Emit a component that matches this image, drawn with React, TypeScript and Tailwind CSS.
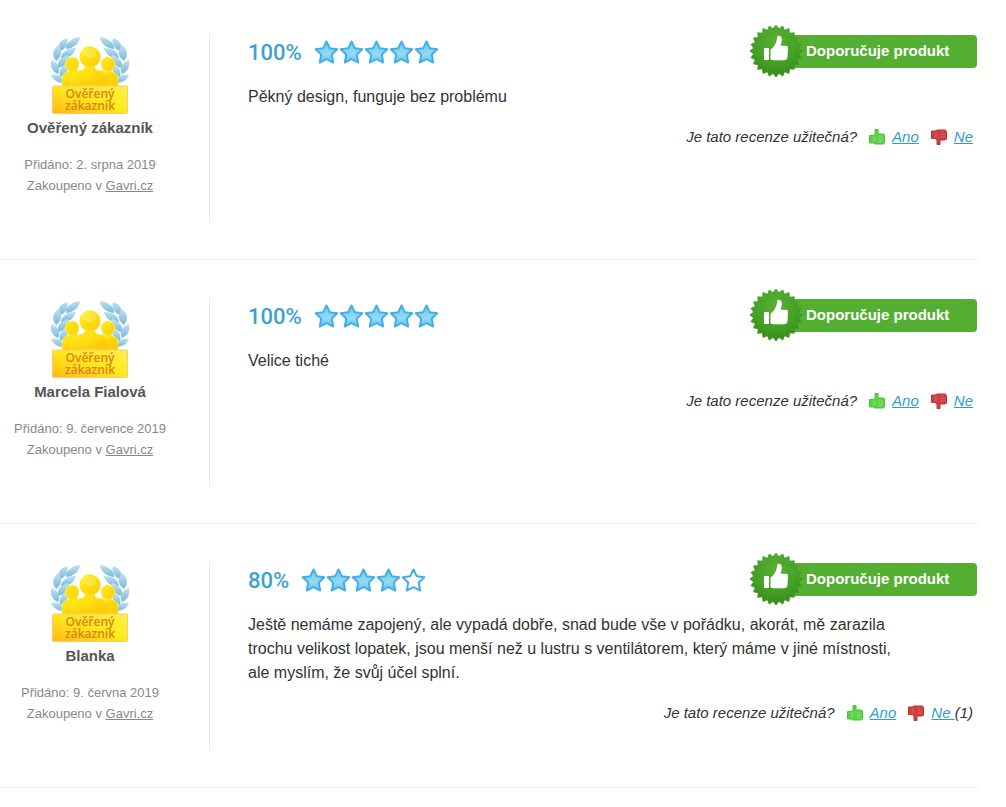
type Review = {
  name: string;
  date: string;
  percent: number;
  stars: number;
  text: string;
  noVotes?: number;
};

const reviews: Review[] = [
  {
    name: 'Ověřený zákazník',
    date: '2. srpna 2019',
    percent: 100,
    stars: 5,
    text: 'Pěkný design, funguje bez problému',
  },
  {
    name: 'Marcela Fialová',
    date: '9. července 2019',
    percent: 100,
    stars: 5,
    text: 'Velice tiché',
  },
  {
    name: 'Blanka',
    date: '9. června 2019',
    percent: 80,
    stars: 4,
    text: 'Ještě nemáme zapojený, ale vypadá dobře, snad bude vše v pořádku, akorát, mě zarazila trochu velikost lopatek, jsou menší než u lustru s ventilátorem, který máme v jiné místnosti, ale myslím, že svůj účel splní.',
    noVotes: 1,
  },
];

const SEAL_TEETH = 24;
const sealPoints = Array.from({ length: SEAL_TEETH * 2 }, (_, i) => {
  const angle = (i * Math.PI) / SEAL_TEETH - Math.PI / 2;
  const r = i % 2 === 0 ? 26.5 : 23;
  return `${(26 + r * Math.cos(angle)).toFixed(2)},${(26 + r * Math.sin(angle)).toFixed(2)}`;
}).join(' ');

function Laurel() {
  return (
    <g fill="url(#leaf)">
      <path d="M16 14C16 7 22 3 30 2C29 9 24 13 16 14Z" />
      <path d="M10 16C7 10 10 5 17 3C19 9 16 14 10 16Z" />
      <path d="M11 23C12 16 18 13 26 13C24 20 18 24 11 23Z" />
      <path d="M6 26C1 20 3 14 8 10C13 16 12 22 6 26Z" />
      <path d="M8 33C7 26 11 22 18 20C19 27 15 32 8 33Z" />
      <path d="M8 39C1 36 0 30 1 25C8 27 11 33 8 39Z" />
      <path d="M14 48C8 48 3 45 1 40C8 38 13 42 14 48Z" />
      <path d="M10 42C8 35 12 31 17 30C19 36 16 40 10 42Z" />
    </g>
  );
}

function CustomerBadge() {
  return (
    <svg className="h-20 w-20" viewBox="0 0 80 80" role="img" aria-label="Ověřený zákazník">
      <defs>
        <linearGradient id="leaf" x1="0" y1="0" x2="0" y2="1">
          <stop offset="0" stopColor="#bfe2f4" />
          <stop offset="1" stopColor="#7ab9da" />
        </linearGradient>
        <linearGradient id="gold" x1="0" y1="0" x2="1" y2="1">
          <stop offset="0" stopColor="#ffef1a" />
          <stop offset="1" stopColor="#fdcb05" />
        </linearGradient>
        <linearGradient id="plate" x1="0" y1="1" x2="1" y2="0">
          <stop offset="0" stopColor="#fdb813" />
          <stop offset="0.5" stopColor="#ffe81a" />
          <stop offset="1" stopColor="#fff04a" />
        </linearGradient>
      </defs>
      <Laurel />
      <g transform="matrix(-1 0 0 1 80 0)">
        <Laurel />
      </g>
      <g fill="url(#gold)" stroke="#ffe873" strokeWidth="0.5">
        <path d="M12 51V44C12 39 15 37 19 36L18 33H26L28 37V51Z" />
        <path d="M68 51V44C68 39 65 37 61 36L62 33H54L52 37V51Z" />
        <circle cx="22" cy="29" r="7" />
        <circle cx="58" cy="29" r="7" />
        <path d="M21 51V43C22 38 27 36 32 35C36 34 35 31 35 29H45C45 31 44 34 48 35C53 36 58 38 59 43V51Z" />
        <circle cx="40" cy="22" r="10.500" />
      </g>
      <ellipse cx="39" cy="18" rx="7" ry="5" fill="#fff" opacity="0.2" />
      <path d="M12 51V47C28 49 46 46 62 38C66 40 68 42 68 45V51Z" fill="#fbc400" opacity="0.35" />
      <rect x="2.500" y="51" width="75" height="27.500" rx="1" fill="url(#plate)" stroke="#f8c87c" />
      <g
        fill="#e07f1c"
        fontFamily="'Open Sans', sans-serif"
        fontSize="12"
        fontWeight="600"
        textAnchor="middle"
      >
        <text x="40" y="63">Ověřený</text>
        <text x="40" y="75">zákazník</text>
      </g>
    </svg>
  );
}

function Star({ filled }: { filled: boolean }) {
  return (
    <svg className="h-[26px] w-[25px]" viewBox="0 0 25 26" aria-hidden="true">
      <defs>
        <linearGradient id="starFill" x1="0" y1="0" x2="0" y2="1">
          <stop offset="0" stopColor="#6cc8f0" />
          <stop offset="0.6" stopColor="#93dcf6" />
          <stop offset="1" stopColor="#62c3ee" />
        </linearGradient>
      </defs>
      <path
        d="M12.500 2.500L15.800 9.300L23.300 10.300L17.800 15.500L19.200 23.500L12.500 20.200L5.800 23.500L7.200 15.500L1.700 10.300L9.200 9.300Z"
        fill={filled ? 'url(#starFill)' : '#fff'}
        stroke="#45aee4"
        strokeWidth="2"
        strokeLinejoin="round"
      />
    </svg>
  );
}

function Recommended() {
  return (
    <div className="flex items-center pr-px">
      <svg className="relative h-[52px] w-[52px]" viewBox="0 0 52 52" aria-hidden="true">
        <defs>
          <radialGradient id="seal" cx="0.5" cy="0.3" r="0.7">
            <stop offset="0" stopColor="#55b032" />
            <stop offset="0.6" stopColor="#47a026" />
            <stop offset="1" stopColor="#358c17" />
          </radialGradient>
        </defs>
        <polygon points={sealPoints} fill="url(#seal)" />
        <path
          fill="#fff"
          d="M14 24Q14 23 15 23H19V35H15Q14 35 14 34ZM20.500 24.500C23 23 25 20 26 17.500C27 15 27 13 27.500 11C30 10 32 12 31.800 15C31.600 17.500 31 19 30.700 20.700H36Q38 20.700 38 23L37.500 32Q37 35.300 34 35.300H24L20.500 34.500Z"
        />
      </svg>
      <div className="-ml-7 flex h-[33px] w-[203px] items-center rounded bg-[#53ae31] pl-8 text-[15px] font-bold text-white">
        Doporučuje produkt
      </div>
    </div>
  );
}

function Thumb({ down = false }: { down?: boolean }) {
  return (
    <svg className={down ? 'h-4 w-4 -scale-y-100' : 'h-4 w-4'} viewBox="0 0 16 16" aria-hidden="true">
      <path
        d="M0.500 6.500H4.500L6 4.500V0.500H9V5H14.500L15.500 6V13.500L14.500 15H5.500L4.500 14H0.500Z"
        fill={down ? '#d04040' : '#5fd24c'}
        stroke={down ? '#bb3232' : '#4abf3a'}
      />
      <path
        d="M5 7V13M10 8H14M10 10.500H14M10 13H13"
        fill="none"
        stroke={down ? '#da6060' : '#83e074'}
      />
    </svg>
  );
}

function Votes({ noVotes }: { noVotes?: number }) {
  return (
    <div className="mt-4 flex h-6 items-center justify-end pr-[5px] text-[15px] italic">
      <span className="mr-3">Je tato recenze užitečná?</span>
      <Thumb />
      <a href="#ano" className="mr-3 ml-[7px] text-[#2f9fd0] underline">Ano</a>
      <Thumb down />
      <a href="#ne" className="ml-[7px] whitespace-pre text-[#2f9fd0] underline">
        {noVotes ? 'Ne ' : 'Ne'}
      </a>
      {noVotes && <span>({noVotes})</span>}
    </div>
  );
}

function ReviewItem({ review }: { review: Review }) {
  return (
    <article className="flex border-b border-[#ebebeb] pt-[37px] pb-9">
      {/* Author */}
      <div className="min-h-[190px] w-[210px] shrink-0 border-r border-[#ebebeb] pt-0.5 pr-[29px] text-center">
        <div className="flex justify-center">
          <CustomerBadge />
        </div>
        <h3 className="mt-[3px] text-[15px] leading-5 font-bold text-[#555]">{review.name}</h3>
        <p className="mt-4 text-[13px] leading-[21px] text-[#888]">
          Přidáno: {review.date}
          <br />
          Zakoupeno v <a href="#gavri" className="underline">Gavri.cz</a>
        </p>
      </div>

      {/* Rating and text */}
      <div className="-mt-2 min-w-0 flex-1 pl-[38px]">
        <div className="flex items-center justify-between">
          <div className="flex items-center gap-3 pt-0.5">
            <span className="font-[Roboto,sans-serif] text-[22px] font-medium text-[#3ba3d0]">
              {review.percent}%
            </span>
            <div className="flex" role="img" aria-label={`${review.stars} z 5 hvězdiček`}>
              {[1, 2, 3, 4, 5].map((n) => (
                <Star key={n} filled={n <= review.stars} />
              ))}
            </div>
          </div>
          <Recommended />
        </div>
        <p className="mt-2 max-w-[660px] text-base leading-6">{review.text}</p>
        <Votes noVotes={review.noVotes} />
      </div>
    </article>
  );
}

export default function App() {
  return (
    <main className="-mt-1 bg-white pr-7 font-['Liberation_Sans',Arial,sans-serif] text-[#333]">
      {reviews.map((review) => (
        <ReviewItem key={review.name} review={review} />
      ))}
    </main>
  );
}
